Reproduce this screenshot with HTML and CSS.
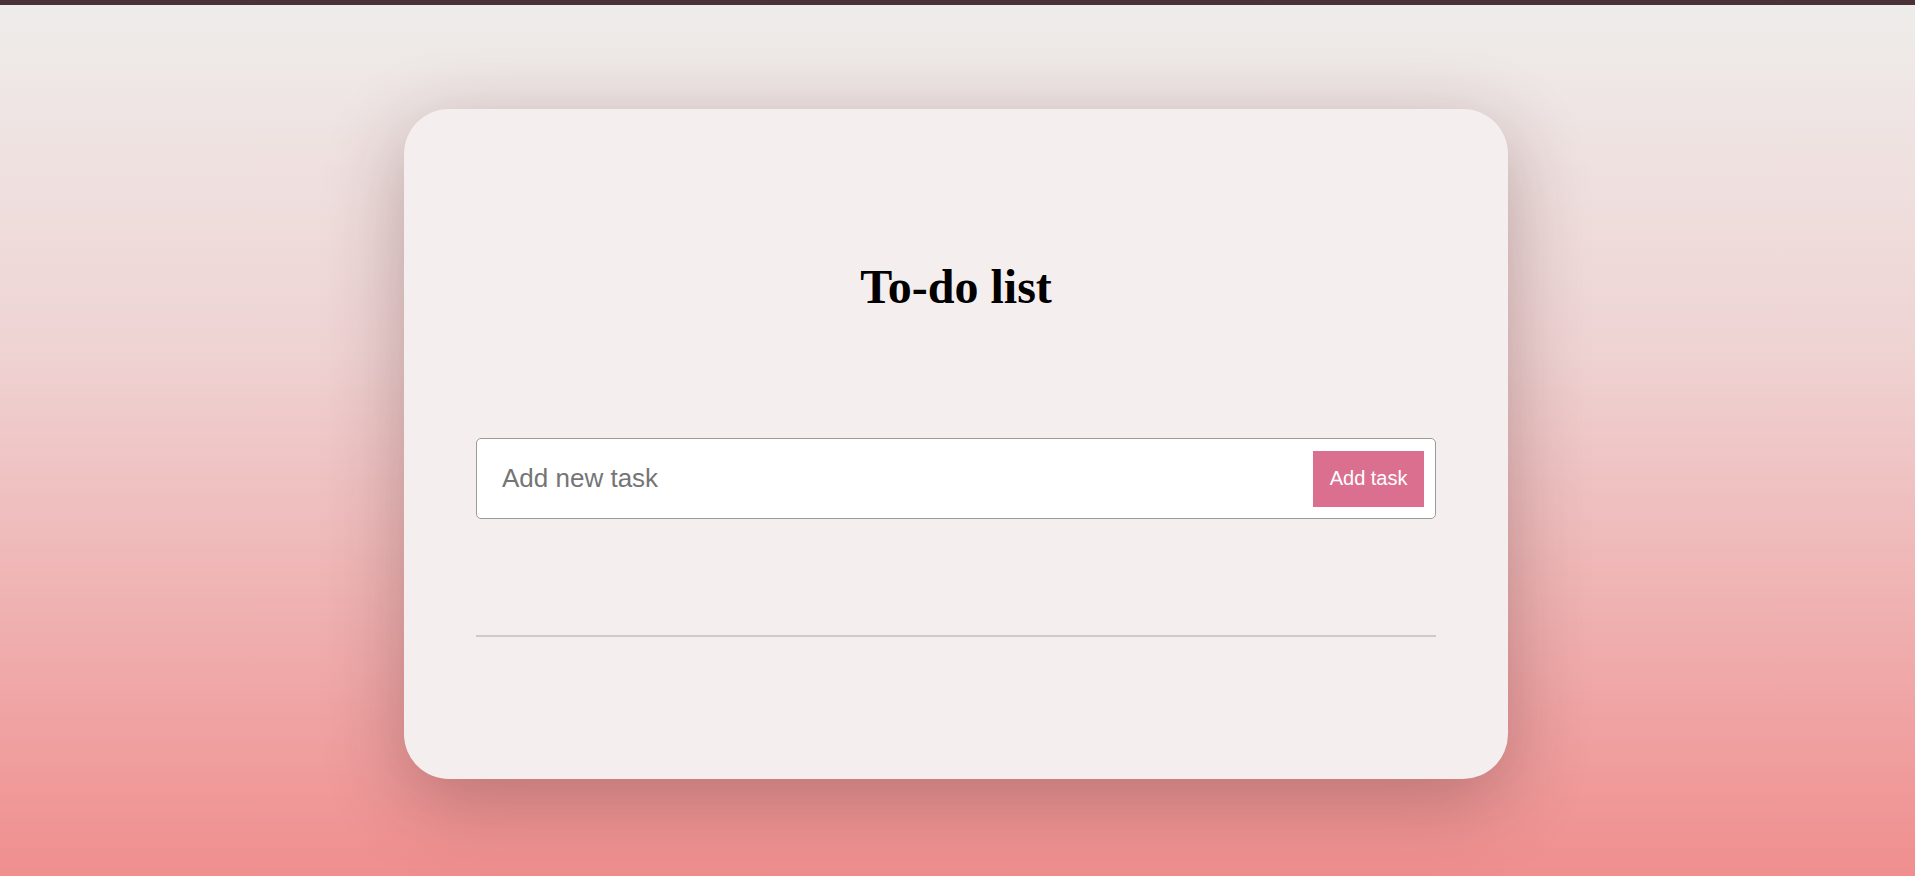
FILE: index.html
```html
<!DOCTYPE html>
<html lang="en">
<head>
<meta charset="utf-8">
<title>To-do list</title>
<link rel="stylesheet" href="styles.css">
</head>
<body>
<div class="topbar"></div>
<main class="page">
  <section class="card">
    <h1 class="title">To-do list</h1>
    <div class="entry">
      <input class="entry-input" type="text" placeholder="Add new task">
      <button class="entry-button" type="button">Add task</button>
    </div>
    <ul class="tasks"></ul>
  </section>
</main>
</body>
</html>
```

FILE: styles.css
```css
html, body {
  margin: 0;
  padding: 0;
  height: 100%;
}

body {
  display: flex;
  flex-direction: column;
  font-family: "Liberation Serif", "Times New Roman", serif;
  background: linear-gradient(to bottom, #eeedeb 0%, #efd3d3 40%, #f08e8e 100%);
  overflow: hidden;
}

.topbar {
  height: 5px;
  flex: none;
  background: #4b3238;
}

.page {
  flex: 1;
  display: flex;
  justify-content: center;
  align-items: flex-start;
  padding: 104px 3px 0 0;
}

.card {
  width: 1104px;
  box-sizing: border-box;
  padding: 150px 72px 142px;
  background: #f4eeee;
  border-radius: 45px;
  box-shadow: 0 22px 80px rgba(70, 30, 30, 0.32);
  display: flex;
  flex-direction: column;
}

.title {
  margin: 0;
  font-size: 48px;
  line-height: 56px;
  font-weight: bold;
  text-align: center;
  color: #000;
}

.entry {
  margin-top: 123px;
  height: 81px;
  box-sizing: border-box;
  display: flex;
  align-items: center;
  gap: 12px;
  padding: 0 11px 0 25px;
  background: #fff;
  border: 1px solid #9e9a9a;
  border-radius: 5px;
}

.entry-input {
  flex: 1;
  min-width: 0;
  border: none;
  outline: none;
  padding: 0;
  background: transparent;
  font-family: "Liberation Sans", Arial, sans-serif;
  font-size: 26px;
  color: #333;
}

.entry-input::placeholder {
  color: #757575;
}

.entry-button {
  height: 56px;
  padding: 0 16.5px;
  border: none;
  border-radius: 0;
  background: #db6f8f;
  color: #fff;
  font-family: "Liberation Sans", Arial, sans-serif;
  font-size: 20px;
  cursor: pointer;
}

.tasks {
  list-style: none;
  margin: 116px 0 0;
  padding: 0;
  border-bottom: 2px solid #cccaca;
}
```
